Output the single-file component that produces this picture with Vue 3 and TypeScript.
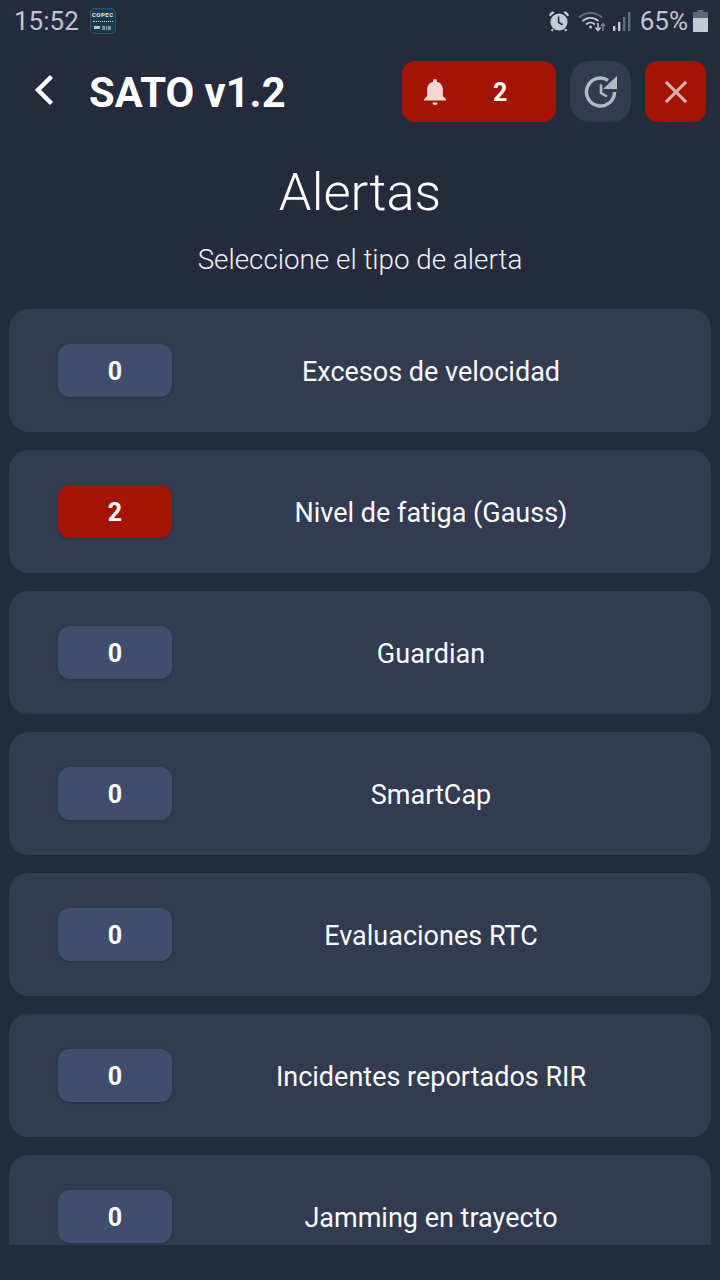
<template>
  <div class="screen">
    <div class="status-bar">
      <div class="status-left">
        <span class="clock">15:52</span>
        <div class="app-badge">
          <span class="badge-top">COPEC</span>
          <span class="badge-dots"></span>
          <span class="badge-bottom"><i class="badge-truck"></i>RIR</span>
        </div>
      </div>
      <div class="status-right">
        <svg class="ic-alarm" viewBox="0 0 24 24" fill="#c5cad4">
          <path d="M3.2 7.6 7.6 3.6 5.9 2.2C4.6 2.4 2.4 4.4 2 6.2zM20.8 7.6 16.4 3.6l1.7-1.4c1.3.2 3.5 2.2 3.9 4z" />
          <circle cx="12" cy="13" r="8.6" />
          <path d="M11.6 7.5v6l4 2.2" fill="none" stroke="#232b3d" stroke-width="1.6" />
          <path d="M6 20 4.6 22M18 20l1.4 2" stroke="#c5cad4" stroke-width="2" />
        </svg>
        <svg class="ic-wifi" viewBox="0 0 28 22" fill="none" stroke="#8b92a1" stroke-width="1.8">
          <path d="M1 7.5C7.5 1.5 17.5 1.5 24 7.5" stroke="#5f6778" />
          <path d="M4.5 11C9 6.8 16 6.8 20.5 11" stroke="#c5cad4" />
          <path d="M8 14.5c2.6-2.4 6.4-2.4 9 0" stroke="#c5cad4" />
          <circle cx="12.5" cy="17" r="1.5" fill="#c5cad4" stroke="none" />
          <path d="M20 13v7M17.5 17.5l2.5 3 2.5-3" stroke="#c5cad4" stroke-width="1.5" />
          <path d="M25 21v-7M23 16l2-2.5 2 2.5" stroke-width="1.4" stroke="#7b8291" />
        </svg>
        <svg class="ic-signal" viewBox="0 0 20 22">
          <rect x="1" y="16" width="2.4" height="5" fill="#c5cad4" />
          <rect x="6" y="12" width="2.4" height="9" fill="#c5cad4" />
          <rect x="11" y="7" width="2.4" height="14" fill="#666e7e" />
          <rect x="16" y="2" width="2.4" height="19" fill="#666e7e" />
        </svg>
        <span class="battery-text">65%</span>
        <svg class="ic-battery" viewBox="0 0 15 22">
          <path d="M4.5 0h6v2H14a1 1 0 0 1 1 1v18a1 1 0 0 1-1 1H1a1 1 0 0 1-1-1V3a1 1 0 0 1 1-1h3.5z" fill="#5f6778" />
          <path d="M0 8h15v13a1 1 0 0 1-1 1H1a1 1 0 0 1-1-1z" fill="#c5cad4" />
        </svg>
      </div>
    </div>

    <header class="app-header">
      <div class="header-left">
        <svg class="ic-back" viewBox="0 0 20 32" fill="none" stroke="#fff" stroke-width="4.4">
          <path d="M17.5 2.5 4 16 17.500 29.500" />
        </svg>
        <h1 class="app-title">SATO v1.2</h1>
      </div>
      <div class="header-actions">
        <button class="btn btn-alert">
          <svg class="ic-bell" viewBox="0 0 24 26" fill="#f0d6d4">
            <path d="M12 0c1.100 0 1.900.8 1.900 1.900v.8c3.700.9 6 4 6 8v6.300l3.100 3.200v1.300H1v-1.300L4.100 17v-6.300c0-4 2.300-7.100 6-8v-.8C10.100.8 10.900 0 12 0z" />
            <path d="M9.500 23.500h5a2.500 2.500 0 0 1-5 0z" />
          </svg>
          <span class="alert-total">2</span>
        </button>
        <button class="btn btn-refresh">
          <svg class="ic-history" viewBox="0 0 36 36" fill="none" stroke="#b4b9c3" stroke-width="3.4">
            <path d="M31.5 18A14 14 0 1 1 25 6.200" />
            <path d="M18 10.500V19l6 3.500" stroke-width="2.6" />
            <path d="M34 2V15H20z" fill="#b4b9c3" stroke="none" />
          </svg>
        </button>
        <button class="btn btn-close">
          <svg class="ic-close" viewBox="0 0 26 26" stroke="#d9aeaa" stroke-width="3.4">
            <path d="M2 2l22 22M24 2 2 24" />
          </svg>
        </button>
      </div>
    </header>

    <div class="intro">
      <h2 class="page-title">Alertas</h2>
      <p class="page-subtitle">Seleccione el tipo de alerta</p>
    </div>

    <div class="alert-list">
      <div v-for="item in alertTypes" :key="item.label" class="alert-card">
        <div class="count-pill" :class="{ 'has-alerts': item.count > 0 }">{{ item.count }}</div>
        <div class="alert-label">{{ item.label }}</div>
      </div>
    </div>
  </div>
</template>

<script setup lang="ts">
interface AlertType {
  label: string;
  count: number;
}

const alertTypes: AlertType[] = [
  { label: 'Excesos de velocidad', count: 0 },
  { label: 'Nivel de fatiga (Gauss)', count: 2 },
  { label: 'Guardian', count: 0 },
  { label: 'SmartCap', count: 0 },
  { label: 'Evaluaciones RTC', count: 0 },
  { label: 'Incidentes reportados RIR', count: 0 },
  { label: 'Jamming en trayecto', count: 0 },
];
</script>

<style>
html,
body {
  margin: 0;
  background: #232b3d;
}
</style>

<style scoped>
.screen {
  width: 720px;
  height: 1280px;
  background: #232b3d;
  font-family: Roboto, "Liberation Sans", sans-serif;
  color: #fff;
  overflow: hidden;
  display: flex;
  flex-direction: column;
}

.status-bar {
  height: 44px;
  padding: 0 12px 2px 14px;
  display: flex;
  align-items: center;
  justify-content: space-between;
  box-sizing: border-box;
}

.status-left,
.status-right {
  display: flex;
  align-items: center;
}

.clock {
  font-size: 26px;
  color: #c0c5cf;
}

.app-badge {
  width: 26px;
  height: 26px;
  margin-left: 11px;
  border-radius: 5px;
  background: #1b3a49;
  box-shadow: inset 0 0 0 1px #3a5260;
  display: flex;
  flex-direction: column;
  align-items: center;
  justify-content: center;
  gap: 3px;
  overflow: hidden;
}

.badge-top,
.badge-bottom {
  font-size: 6px;
  line-height: 6px;
  font-weight: 700;
  color: #e6eef2;
  letter-spacing: 0.5px;
}

.badge-bottom {
  display: flex;
  align-items: center;
  gap: 2px;
  font-size: 5px;
  color: #b9c9d1;
}

.badge-truck {
  width: 6px;
  height: 3px;
  background: #b9c9d1;
}

.badge-dots {
  width: 20px;
  border-top: 1px dotted #cfd8dc;
}

.ic-alarm {
  width: 24px;
  height: 24px;
}

.ic-wifi {
  width: 28px;
  height: 22px;
  margin-left: 7px;
}

.ic-signal {
  width: 20px;
  height: 22px;
  margin-left: 6px;
}

.battery-text {
  font-size: 26px;
  color: #c0c5cf;
  margin-left: 8px;
}

.ic-battery {
  width: 15px;
  height: 22px;
  margin-left: 5px;
}

.app-header {
  height: 95px;
  padding: 0 14px 0 34px;
  display: flex;
  align-items: center;
  justify-content: space-between;
  box-sizing: border-box;
}

.header-left {
  display: flex;
  align-items: center;
}

.ic-back {
  width: 20px;
  height: 32px;
  margin-bottom: 4px;
}

.app-title {
  margin: 3px 0 0 35px;
  font-size: 41.7px;
  font-weight: 700;
  line-height: 50px;
}

.header-actions {
  display: flex;
  gap: 14px;
  align-items: center;
}

.btn {
  height: 61px;
  border: none;
  border-radius: 13px;
  padding: 0;
  display: flex;
  align-items: center;
  justify-content: center;
  color: #fff;
  font-family: inherit;
}

.btn-alert {
  width: 154px;
  background: #a51206;
  justify-content: flex-start;
  padding-left: 21px;
  box-sizing: border-box;
}

.ic-bell {
  width: 24px;
  height: 26px;
}

.alert-total {
  margin-left: 46px;
  padding-top: 2px;
  font-size: 25px;
  font-weight: 700;
}

.btn-refresh {
  width: 61px;
  background: #323c50;
  border-radius: 20px;
}

.ic-history {
  width: 36px;
  height: 36px;
}

.btn-close {
  width: 61px;
  background: #a51206;
}

.ic-close {
  width: 24px;
  height: 24px;
}

.intro {
  text-align: center;
  padding-top: 22px;
}

.page-title {
  margin: 0;
  font-size: 52.5px;
  font-weight: 300;
  line-height: 62px;
}

.page-subtitle {
  margin: 21px 0 0;
  font-size: 27.8px;
  font-weight: 300;
  line-height: 32px;
  color: #f2f3f5;
}

.alert-list {
  margin-top: 33px;
  height: 936px;
  padding: 0 9px;
  display: flex;
  flex-direction: column;
  gap: 18px;
  overflow: hidden;
}

.alert-card {
  flex: none;
  height: 123px;
  border-radius: 20px;
  background: #323c50;
  display: flex;
  align-items: center;
  padding: 0 21px 0 49px;
  box-sizing: border-box;
}

.count-pill {
  width: 114px;
  height: 53px;
  flex: none;
  border-radius: 12px;
  background: #3f4e6c;
  display: flex;
  align-items: center;
  justify-content: center;
  padding-top: 2px;
  box-sizing: border-box;
  font-size: 25px;
  font-weight: 700;
  box-shadow: 0 1px 3px rgba(20, 26, 40, 0.35);
}

.count-pill.has-alerts {
  background: #a51206;
}

.alert-label {
  flex: 1;
  padding-top: 2px;
  text-align: center;
  font-size: 27px;
  color: #fbfbfc;
}
</style>
